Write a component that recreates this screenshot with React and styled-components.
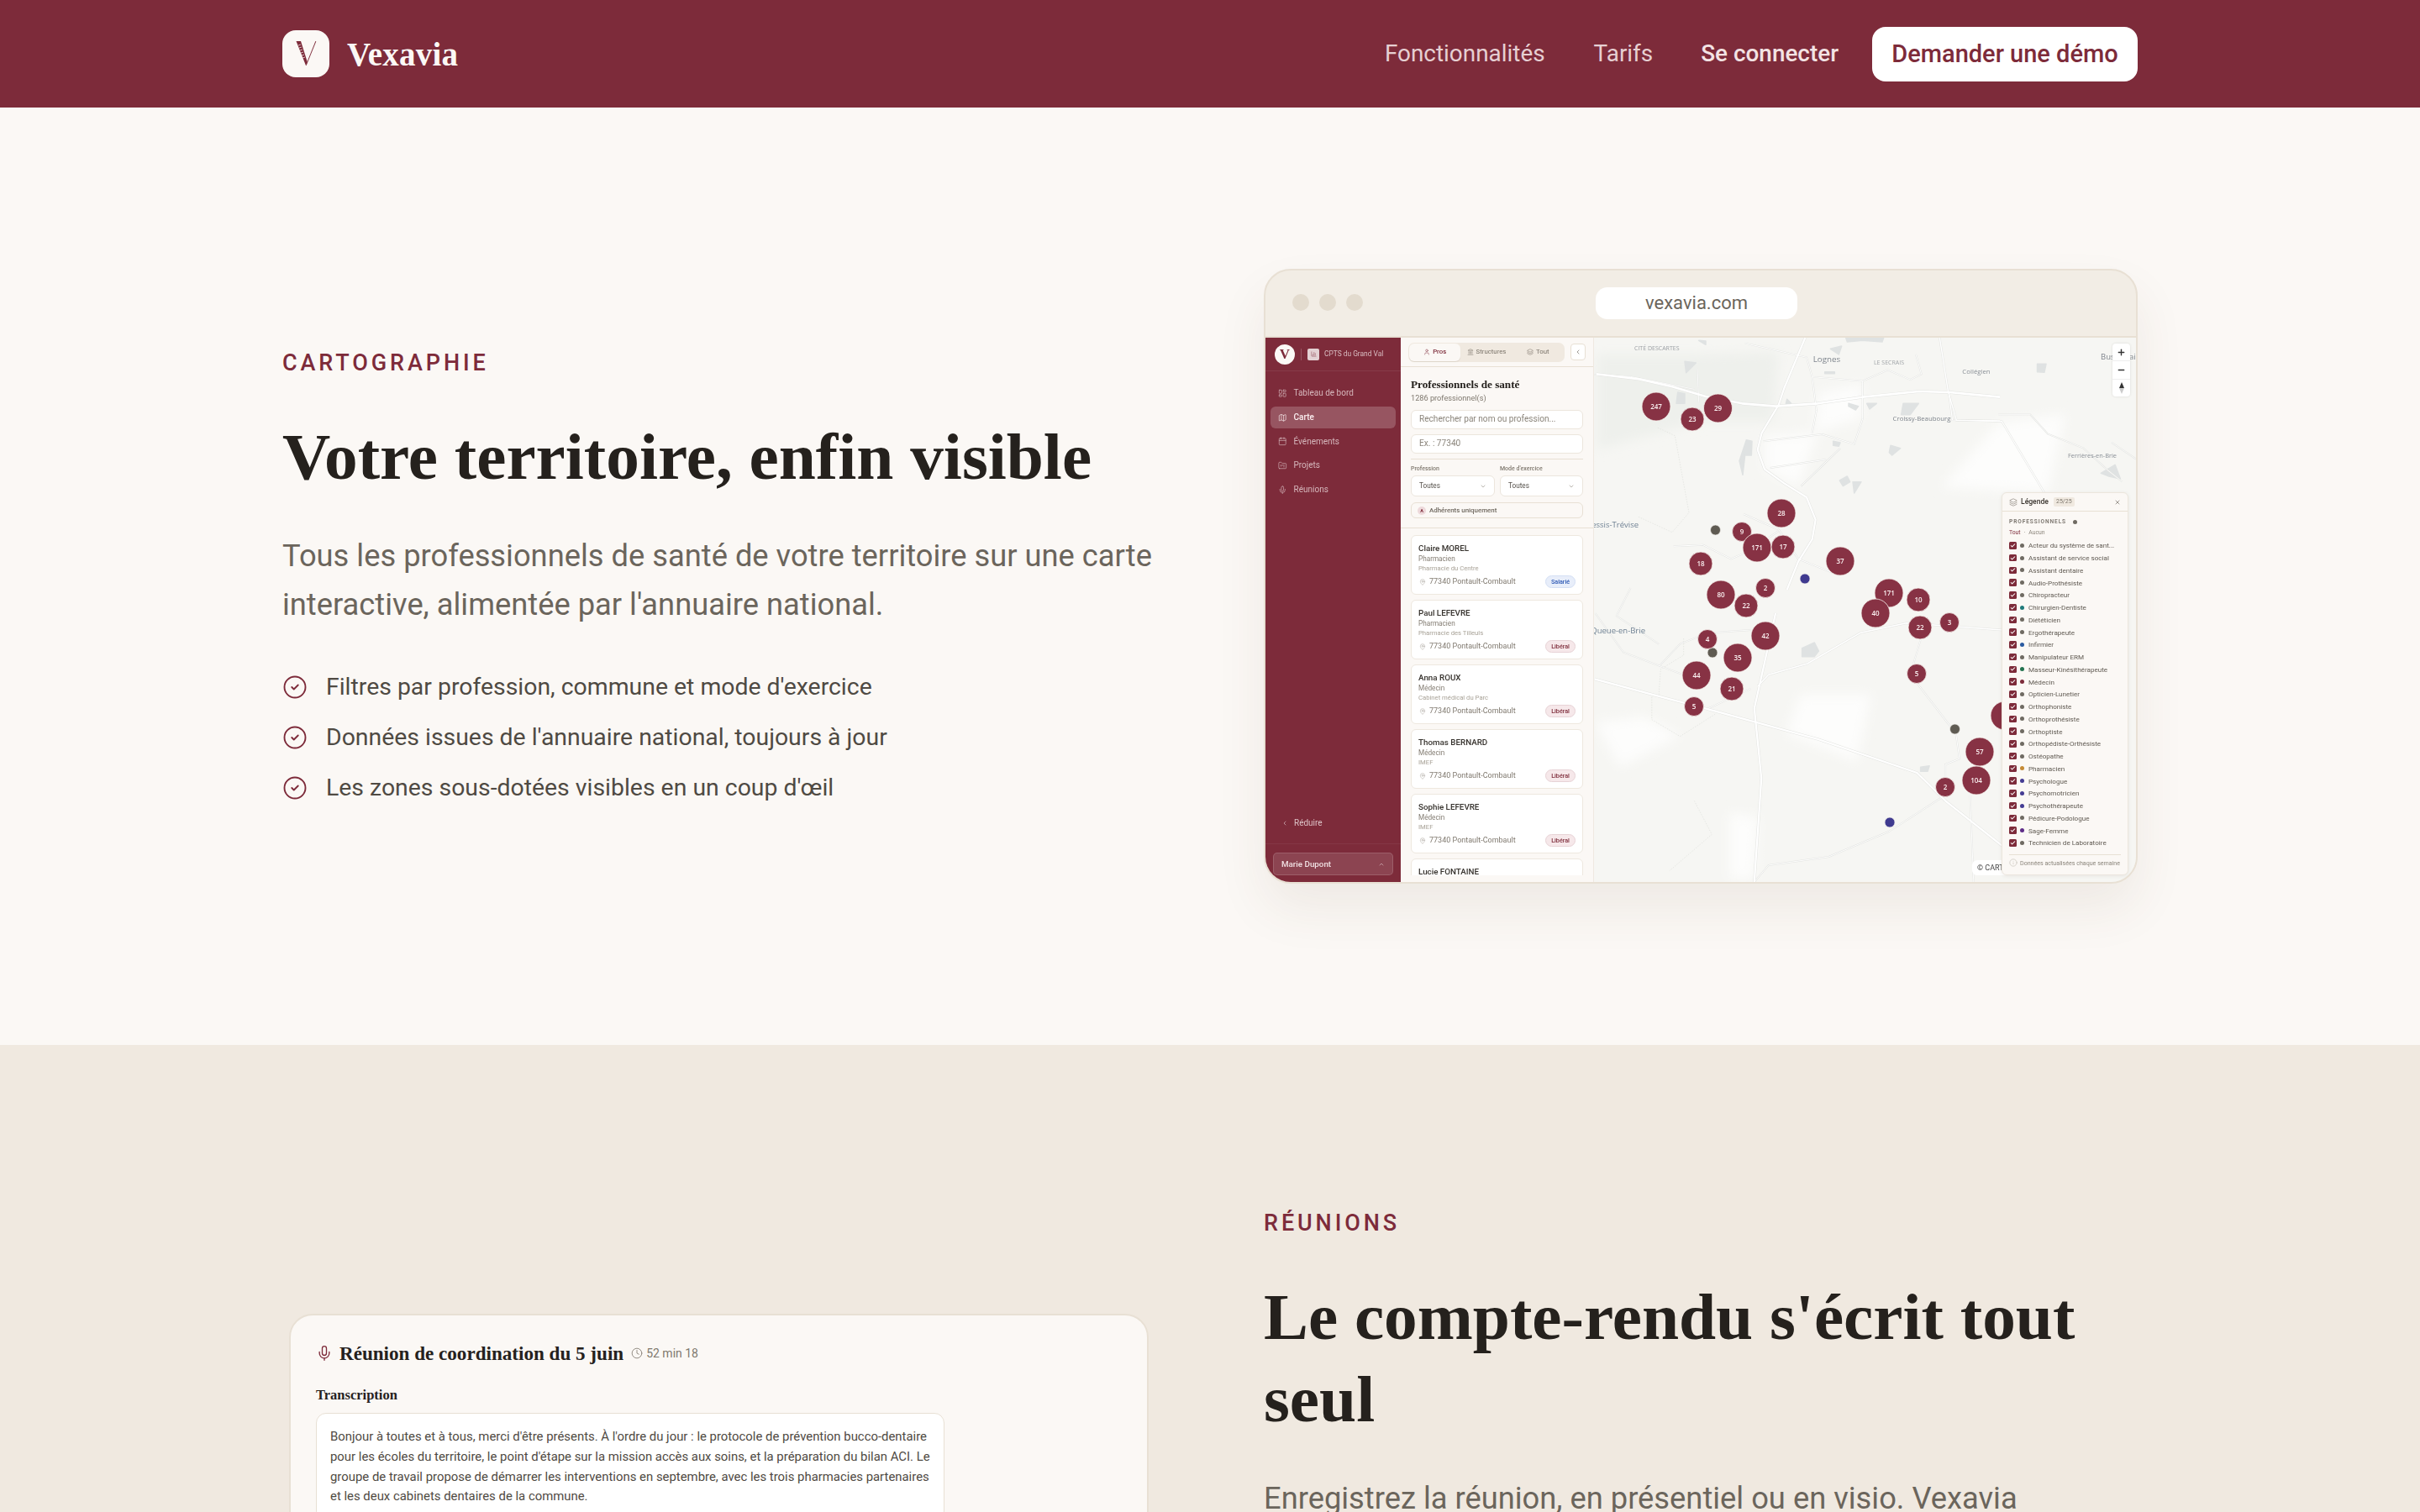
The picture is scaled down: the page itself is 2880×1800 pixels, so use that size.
import React from "react";
import styled, { createGlobalStyle } from "styled-components";
import {
  LayoutDashboard, Map as MapIcon, Calendar, FolderKanban, Mic, ChevronLeft, ChevronDown, ChevronUp,
  User, Landmark, Layers, MapPin, X, Check, Info, CircleCheck, Clock, Plus, Minus, BarChart3,
} from "lucide-react";

const SANS = '"Roboto","Liberation Sans",sans-serif';
const SERIF = '"Liberation Serif","DejaVu Serif",serif';
const WINE = "#7D2B3A";
const CREAM = "#FBF8F5";
const SAND = "#F0E9E0";
const LINE = "#E8E0D4";
const INK = "#25211D";
const MUTED = "#6B655C";

const Global = createGlobalStyle`
  html, body { margin: 0; padding: 0; background: ${CREAM}; overflow: hidden; }
  #root { height: 1800px; overflow: hidden; font-family: ${SANS}; }
  * { box-sizing: border-box; }
`;

/* ---------- top bar ---------- */
const TopBar = styled.header`
  height: 128px; background: ${WINE}; padding: 0 336px;
  display: flex; align-items: center; justify-content: space-between;
`;
const Brand = styled.div`display: flex; align-items: center; gap: 21px;`;
const LogoTile = styled.div`
  width: 56px; height: 56px; border-radius: 16px; background: ${CREAM}; display: flex;
`;
const BrandName = styled.span`
  font: 700 39px/1 ${SERIF}; color: ${CREAM}; letter-spacing: 0.2px;
`;
const TopNav = styled.nav`display: flex; align-items: center;`;
const TopLink = styled.a`
  font: ${p => (p.$strong ? 500 : 400)} 27.9px/1 ${SANS};
  color: ${p => (p.$strong ? "#F3E3E4" : "#E6CFD2")};
  margin-right: ${p => p.$gap}px;
`;
const DemoButton = styled.a`
  height: 65px; width: 316px; border-radius: 16px; background: #fff; color: ${WINE};
  font: 500 29px/65px ${SANS}; text-align: center;
`;

/* ---------- sections ---------- */
const Section = styled.section`
  background: ${p => p.$bg}; padding: 192px 336px;
  display: grid; grid-template-columns: 1040px 1040px; column-gap: 128px;
  align-items: ${p => p.$align};
`;
const Eyebrow = styled.div`
  font: 500 27px/40px ${SANS}; color: ${WINE}; letter-spacing: 3.9px; text-transform: uppercase;
`;
const Heading = styled.h2`
  margin: 42px 0 0; font: 700 79.3px/98px ${SERIF}; color: ${INK}; letter-spacing: 0;
`;
const Lead = styled.p`
  margin: 41px 0 0; font: 400 36.3px/58px ${SANS}; color: ${MUTED};
`;
const Bullets = styled.ul`
  list-style: none; margin: 46px 0 0; padding: 0; display: flex; flex-direction: column; gap: 15px;
`;
const Bullet = styled.li`
  display: flex; align-items: center; gap: 22px; font: 400 28.4px/45px ${SANS}; color: #4F4A43;
  svg { color: ${WINE}; flex: none; }
`;

/* ---------- browser frame ---------- */
const Frame = styled.div`
  height: 732px; border: 2px solid ${LINE}; border-radius: 32px; overflow: hidden; background: #F2EDE5;
  box-shadow: 0 30px 60px rgba(90, 60, 40, 0.08); display: flex; flex-direction: column;
`;
const Chrome = styled.div`
  height: 80px; flex: none; border-bottom: 2px solid ${LINE}; display: flex; align-items: center;
  padding-left: 32px;
`;
const Dots = styled.div`display: flex; gap: 12px; margin-bottom: 2px;`;
const Dot = styled.i`width: 20px; height: 20px; border-radius: 50%; background: #E3DBCE;`;
const UrlPill = styled.div`
  width: 240px; height: 38px; margin-left: 277px; border-radius: 14px; background: #fff;
  font: 400 22px/38px ${SANS}; color: ${MUTED}; text-align: center;
`;
const Screen = styled.div`flex: 1; display: flex; min-height: 0; filter: blur(0.35px);`;

/* ---------- mock sidebar ---------- */
const Side = styled.aside`
  width: 161px; flex: none; background: ${WINE}; display: flex; flex-direction: column; color: #E9D6D9;
`;
const SideBrand = styled.div`
  height: 40px; flex: none; display: flex; align-items: center; padding-left: 11px;
  border-bottom: 1px solid rgba(255,255,255,0.08);
`;
const SideLogo = styled.span`
  width: 24px; height: 24px; border-radius: 50%; background: ${CREAM}; color: ${WINE};
  font: 700 17px/24px ${SERIF}; text-align: center;
`;
const SideDivider = styled.i`width: 1px; height: 14px; background: rgba(255,255,255,.2); margin: 0 7px;`;
const OrgTile = styled.span`
  width: 14px; height: 14px; border-radius: 2px; background: #EFE3E4; color: ${WINE}; opacity: .9;
  display: flex; align-items: center; justify-content: center; margin-right: 6px;
`;
const OrgName = styled.span`font: 400 8.4px/1 ${SANS}; color: #D9BDC2; white-space: nowrap;`;
const SideNav = styled.nav`
  padding: 13px 6px 0; display: flex; flex-direction: column; gap: 2.75px; flex: 1;
`;
const SideItem = styled.a`
  height: 26px; border-radius: 6px; padding-left: 9px; display: flex; align-items: center; gap: 8px;
  font: ${p => (p.$active ? 500 : 400)} 10px/1 ${SANS};
  color: ${p => (p.$active ? "#FBEFF0" : "#D6B8BD")};
  background: ${p => (p.$active ? "rgba(255,255,255,.2)" : "transparent")};
`;
const Collapse = styled.div`
  height: 14px; margin-bottom: 17px; padding-left: 19px; display: flex; align-items: center; gap: 7px;
  font: 400 10px/1 ${SANS}; color: #DDC3C7;
`;
const SideFoot = styled.div`
  height: 46px; flex: none; border-top: 1px solid rgba(255,255,255,.06); padding: 10px 9px 9px;
`;
const UserBox = styled.div`
  height: 27px; border-radius: 5px; background: rgba(255,255,255,.12); border: 1px solid rgba(255,255,255,.14);
  display: flex; align-items: center; justify-content: space-between; padding: 0 9px;
  font: 500 9.8px/1 ${SANS}; color: #F1E1E3;
`;

/* ---------- mock list panel ---------- */
const Panel = styled.div`
  width: 230px; flex: none; background: ${CREAM}; border-right: 1px solid #EFE9E1;
  display: flex; flex-direction: column; overflow: hidden; padding-bottom: 8px;
`;
const PanelTabs = styled.div`
  height: 35px; flex: none; display: flex; align-items: center; gap: 7px; padding: 0 9px;
  border-bottom: 1px solid ${LINE};
`;
const TabGroup = styled.div`
  width: 186px; height: 23px; padding: 1px; border-radius: 7px; background: ${SAND}; display: flex;
`;
const Tab = styled.div`
  flex: 1; border-radius: 6px; display: flex; align-items: center; justify-content: center; gap: 3px;
  font: ${p => (p.$active ? 500 : 400)} 7.8px/1 ${SANS};
  color: ${p => (p.$active ? WINE : "#7A7369")};
  background: ${p => (p.$active ? CREAM : "transparent")};
  box-shadow: ${p => (p.$active ? "0 1px 1px rgba(60,40,20,.1)" : "none")};
`;
const RoundBtn = styled.div`
  width: 18px; height: 20px; border-radius: 4px; background: #fff; border: 1px solid ${LINE};
  display: flex; align-items: center; justify-content: center; color: ${MUTED};
`;
const PanelHead = styled.div`padding: 0 12px;`;
const PanelTitle = styled.h3`
  margin: 14px 0 0; font: 700 13.2px/14px ${SERIF}; color: ${INK};
`;
const PanelSub = styled.div`margin-top: 3px; font: 400 9.2px/12px ${SANS}; color: #7F786E;`;
const Field = styled.div`
  height: 23px; margin-top: ${p => p.$mt}px; border-radius: 6px; background: #fff; border: 1px solid #ECE6DD;
  padding-left: 9px; display: flex; align-items: center; font: 400 10.1px/1 ${SANS}; color: #8B857B;
`;
const Rule = styled.hr`border: 0; border-top: 1px solid ${LINE}; margin: ${p => p.$m};`;
const FilterGrid = styled.div`display: grid; grid-template-columns: 100px 99px; column-gap: 6px; margin-top: 6px;`;
const FilterLabel = styled.div`font: 500 7px/10px ${SANS}; color: #7F786E;`;
const Select = styled.div`
  height: 25px; margin-top: 3px; border-radius: 6px; background: #fff; border: 1px solid #ECE6DD;
  padding: 0 9px; display: flex; align-items: center; justify-content: space-between;
  font: 400 8.2px/1 ${SANS}; color: #55504A; svg { color: #9A948A; }
`;
const Toggle = styled.div`
  height: 19px; margin-top: 7px; border-radius: 6px; border: 1px solid ${LINE};
  padding-left: 7px; display: flex; align-items: center; gap: 4px; font: 500 7.9px/1 ${SANS}; color: #6F685F;
`;
const AdhBadge = styled.span`
  width: 10px; height: 10px; border-radius: 50%; background: #EDD9DB; color: ${WINE};
  font: 700 5.5px/10px ${SANS}; text-align: center;
`;
const CardList = styled.div`
  flex: 1; min-height: 0; overflow: hidden; padding: 0 12px; display: flex; flex-direction: column; gap: 6px;
  border-top: 1px solid ${LINE}; margin-top: 11px; padding-top: 8px;
`;
const ProCard = styled.article`
  flex: none; height: 71px; border-radius: 6px; background: #fff; border: 1px solid #EEE8DF;
  padding: 8px 8px 0;
`;
const ProName = styled.div`font: 500 9.8px/13px ${SANS}; color: #35312C;`;
const ProRole = styled.div`font: 400 8.2px/12px ${SANS}; color: #837C72;`;
const ProOrg = styled.div`font: 400 7.7px/11px ${SANS}; color: #A8A297;`;
const ProAddr = styled.div`
  height: 15px; margin-top: 3px; display: flex; align-items: center; gap: 4px;
  font: 400 9px/1 ${SANS}; color: #7F786E; svg { color: #9A948A; margin-left: 1px; }
`;
const ModeTag = styled.span`
  margin-left: auto; width: 36px; height: 15px; border-radius: 8px; text-align: center;
  font: 500 7.2px/13px ${SANS};
  color: ${p => (p.$blue ? "#2C58B4" : WINE)};
  background: ${p => (p.$blue ? "#E8EEFA" : "#F6E8EA")};
  border: 1px solid ${p => (p.$blue ? "#D4DFF4" : "#E7D3D6")};
`;

/* ---------- mock map ---------- */
const MapArea = styled.div`flex: 1; position: relative; overflow: hidden; background: #F6F6F3;`;
const MapCanvas = styled.svg`display: block; width: 645px; height: 648px;`;
const MapControls = styled.div`
  position: absolute; top: 7px; right: 7px; width: 21px; height: 63px; border-radius: 4px; background: #fff;
  box-shadow: 0 0 3px rgba(0,0,0,.12); display: flex; flex-direction: column; color: #333;
`;
const MapCtrl = styled.div`
  flex: 1; display: flex; align-items: center; justify-content: center;
  & + & { border-top: 1px solid #eee; }
`;
const Attribution = styled.div`
  position: absolute; right: 151px; bottom: 8px; width: 44px; height: 18px; border-radius: 6px 0 0 6px;
  background: #fff; padding-left: 6px; font: 400 9px/18px ${SANS}; color: #444; white-space: nowrap; overflow: hidden;
`;
const Legend = styled.aside`
  position: absolute; top: 184px; right: 9px; width: 151px; height: 456px; border-radius: 6px;
  background: ${CREAM}; border: 1px solid #ECE6DD; box-shadow: 0 1px 4px rgba(60,40,20,.08);
  padding: 0 8px;
`;
const LegendHead = styled.div`
  height: 22px; margin: 0 -8px; padding: 0 8px; border-bottom: 1px solid ${LINE};
  display: flex; align-items: center; gap: 4px; font: 500 8.6px/1 ${SANS}; color: #3A352F;
  svg { color: #6F685F; }
`;
const CountBadge = styled.span`
  margin-left: 2px; padding: 0 3px; border-radius: 2px; background: ${SAND}; font: 400 7px/11px ${SANS}; color: #7F786E;
`;
const LegendClose = styled.span`margin-left: auto; display: flex; color: #6F685F;`;
const GroupTitle = styled.div`
  margin-top: 6px; height: 12px; display: flex; align-items: center; gap: 3px;
  font: 600 6.6px/12px ${SANS}; letter-spacing: .9px; color: #77716A;
`;
const GroupActions = styled.div`margin-top: 2px; font: 400 6.8px/11px ${SANS}; color: #8B857B;`;
const ActAll = styled.span`color: ${WINE}; margin-right: 4px;`;
const ActNone = styled.span`margin-left: 4px;`;
const LegendRows = styled.div`margin-top: 2px; display: flex; flex-direction: column;`;
const LegendRow = styled.div`
  height: 14.75px; display: flex; align-items: center; font: 400 8.1px/1 ${SANS}; color: #5F5951; white-space: nowrap;
`;
const CheckBox = styled.span`
  width: 8.5px; height: 8.5px; border-radius: 1.5px; background: ${WINE}; color: #fff; flex: none;
  display: flex; align-items: center; justify-content: center;
`;
const ColorDot = styled.i`
  width: 5px; height: 5px; border-radius: 50%; background: ${p => p.$c}; margin: 0 5px 0 4.5px; flex: none;
`;
const LegendFoot = styled.div`
  margin-top: 6px; border-top: 1px solid ${LINE}; height: 20px; display: flex; align-items: center; gap: 3px;
  font: 400 7.1px/1 ${SANS}; color: #8B857B; white-space: nowrap; svg { color: #AAA498; flex: none; }
`;

/* ---------- meeting card ---------- */
const MeetCol = styled.div`padding: 128px 0 0 8px;`;
const MeetCard = styled.div`
  width: 1023px; height: 500px; border: 2px solid ${LINE}; border-radius: 28px; background: ${CREAM};
  padding: 30px 30px 0;
`;
const MeetHead = styled.div`
  height: 30px; display: flex; align-items: center; svg { flex: none; }
`;
const MeetTitle = styled.h4`margin: 0 9px 0 8px; font: 700 23.1px/30px ${SERIF}; color: ${INK};`;
const MeetTime = styled.span`
  margin-left: 4px; font: 400 14px/1 ${SANS}; color: #7F786E;
`;
const TransLabel = styled.h5`margin: 25px 0 0; font: 700 16.5px/20px ${SERIF}; color: ${INK};`;
const TransBox = styled.div`
  width: 748px; margin-top: 11px; border: 1px solid ${LINE}; border-radius: 12px; background: #fff;
  padding: 16px 16px; font: 400 14.9px/23.8px ${SANS}; color: #4F4A43; white-space: nowrap;
`;

/* ---------- data ---------- */
const z12 = pts => pts.map(([x, y]) => `${1950 + x / 3},${402 + y / 3}`).join(" ");
const z5 = pts => pts.map(([x, y]) => `${1890 + x / 2.376},${320 + y / 3}`).join(" ");
const z6 = pts => pts.map(([x, y]) => `${1890 + x / 2.376},${700 + y / 3}`).join(" ");

const ROADS = [
  [z12([[-150, 130], [0, 148], [120, 175], [240, 210], [370, 235], [490, 245], [640, 235], [800, 212], [1000, 192], [1110, 195], [1290, 212]]), 2.6],
  [z12([[595, 0], [520, 180], [500, 240], [440, 340], [425, 400], [450, 470], [520, 520], [600, 570], [632, 650], [620, 720], [570, 800], [530, 900]]), 2.2],
  [z12([[1075, 0], [1105, 190], [1135, 295], [1290, 297]]), 1.4],
  [z12([[800, 155], [800, 290], [770, 380], [655, 345], [445, 370]]), 1],
  [z12([[620, 140], [635, 260], [620, 340]]), 1],
  [z12([[470, 465], [670, 435]]), 1],
  [z12([[720, 395], [580, 530]]), 1],
  [z12([[125, 745], [230, 740], [330, 790], [400, 760], [500, 690]]), 1],
  [z12([[210, 110], [215, 230]]), .8],
  [z12([[380, 20], [600, 70], [620, 140], [800, 155], [890, 115], [970, 150], [1010, 130], [990, 60]]), .9],
  [z12([[375, 630], [500, 685], [570, 790], [720, 850]]), 1],
  [z5([[1020, 440], [1030, 540], [1170, 545], [1290, 800]]), 1.2],
  [z5([[1160, 520], [1250, 520], [1300, 590], [1400, 640], [1470, 720], [1510, 760]]), .8],
  [z5([[1480, 620], [1550, 680]]), .8],
  [z5([[18, 378], [120, 385], [300, 430]]), .8],
  [z6([[18, 325], [180, 380], [360, 440], [650, 540], [930, 660], [1010, 760], [1170, 920]]), 2.2],
  [z6([[530, 90], [470, 430], [490, 680], [470, 1050]]), 2.2],
  [z6([[1170, 150], [900, 125], [770, 160], [620, 270], [510, 310], [480, 350]]), 1.5],
  [z6([[930, 340], [1040, 520], [1050, 610], [1010, 630], [1010, 680]]), 1],
  [z6([[1010, 740], [850, 870], [680, 960], [510, 990], [470, 1050]]), .9],
  [z6([[1080, 740], [1090, 1050]]), .9],
  [z6([[940, 185], [920, 270]]), .8],
  [z6([[340, 430], [460, 360]]), .9],
  [z6([[200, 280], [260, 200], [340, 160], [460, 150]]), .8],
  [z6([[20, 90], [100, 230], [270, 310]]), .8],
  [z6([[120, 0], [80, 100], [200, 200]]), .8],
];
const DASHES = [
  z12([[0, 640], [120, 695], [180, 625], [130, 350], [65, 320]]),
  z6([[300, 760], [350, 880], [230, 1010]]),
  z6([[180, 380], [180, 470], [260, 530], [360, 450]]),
  z6([[270, 180], [270, 240], [205, 290], [200, 380]]),
];
const WATER = [
  z12([[165, 85], [205, 90], [170, 125]]),
  z12([[140, 195], [165, 200], [165, 235], [135, 235]]),
  z12([[385, 365], [405, 370], [403, 420], [380, 420], [372, 490], [360, 440]]),
  z12([[945, 235], [1000, 235], [970, 275], [938, 275]]),
  z12([[900, 385], [935, 395], [905, 420], [895, 410]]),
  z12([[815, 235], [850, 235], [825, 255]]),
  z12([[750, 235], [785, 245], [775, 258], [750, 245]]),
  z12([[695, 370], [720, 375], [715, 388], [695, 385]]),
  z12([[718, 510], [745, 495], [755, 515], [730, 530]]),
  z12([[765, 515], [795, 515], [770, 555]]),
  z12([[740, 0], [875, 0], [870, 15], [800, 10], [745, 15]]),
  z12([[685, 40], [725, 30], [715, 60]]),
  z12([[665, 122], [700, 122], [700, 128], [665, 128]]),
  z12([[215, 10], [240, 12], [240, 25]]),
  z12([[530, 220], [545, 235], [525, 240]]),
  z5([[1450, 730], [1490, 700], [1505, 750], [1470, 740]]),
  z5([[1270, 340], [1295, 340], [1290, 370], [1270, 368]]),
  z6([[605, 215], [640, 195], [652, 225], [640, 245], [605, 245]]),
  z6([[940, 640], [965, 635], [960, 655], [940, 655]]),
];
const PATCHES = [
  [z12([[-150, 60], [215, 60], [500, 50], [480, 300], [220, 300], [-150, 400]]), "#EEF0EC"],
  [z12([[640, 200], [800, 165], [790, 290], [630, 340]]), "#FDFDFC"],
  [z12([[450, 350], [640, 340], [570, 530], [450, 470]]), "#FDFDFC"],
  [z5([[1160, 550], [1350, 520], [1300, 800], [1000, 780]]), "#FDFDFC"],
  [z6([[600, 380], [800, 380], [760, 620], [560, 520]]), "#FDFDFC"],
  [z6([[400, 800], [480, 820], [470, 1040], [400, 1040]]), "#FDFDFC"],
  [z6([[20, 480], [160, 460], [260, 530], [90, 640]]), "#FDFDFC"],
];
const MARKERS = [
  [2386, 852, 34, "2"], [1971, 484, 34, "247"], [2014, 499, 28, "23"], [2044.5, 486, 34, "29"], [2120, 611, 34, "28"],
  [2073, 633, 23, "9"], [2091, 652, 34, "171"], [2122, 651, 28, "17"], [2024, 671, 28, "18"], [2190, 668, 34, "37"],
  [2101, 700, 23, "2"], [2048, 708, 34, "80"], [2248, 706, 34, "171"], [2283, 714, 28, "10"], [2078, 721, 28, "22"],
  [2232, 730, 34, "40"], [2285, 747, 28, "22"], [2320, 741, 23, "3"], [2032, 761, 23, "4"], [2101, 757, 34, "42"],
  [2068, 783, 34, "35"], [2281, 802, 23, "5"], [2019, 804, 34, "44"], [2061, 820, 28, "21"], [2016, 841, 23, "5"],
  [2356, 895, 34, "57"], [2352, 929, 34, "104"], [2315, 937, 23, "2"],
];
const PINS = [[2041.5, 631, "#5F5B52"], [2148, 689, "#3F3A8F"], [2038, 777, "#5F5B52"], [2326.5, 868, "#5F5B52"], [2249, 979, "#3F3A8F"]];
const PLACES = [
  ["CITÉ DESCARTES", 1945, 417, 7, "start", "#9A9EA3"], ["Lognes", 2174, 431, 9.8, "middle", "#7F858D"],
  ["LE SECRAIS", 2248, 434, 7, "middle", "#A2A6AA"], ["Collégien", 2352, 445, 7.8, "middle", "#8A9097"],
  ["Croissy-Beaubourg", 2287, 501, 7.8, "middle", "#7F858D"], ["Ferrières-en-Brie", 2490, 545, 7.4, "middle", "#8A9097"],
  ["Bussy-Saint-Georges", 2500, 428, 9.5, "start", "#7F858D"], ["Le Plessis-Trévise", 1950, 628, 9.5, "end", "#6F8193"],
  ["La Queue-en-Brie", 1958, 754, 9.5, "end", "#6F8193"],
];
const PEOPLE = [
  ["Claire MOREL", "Pharmacien", "Pharmacie du Centre", true],
  ["Paul LEFEVRE", "Pharmacien", "Pharmacie des Tilleuls"],
  ["Anna ROUX", "Médecin", "Cabinet médical du Parc"],
  ["Thomas BERNARD", "Médecin", "IMEF"],
  ["Sophie LEFEVRE", "Médecin", "IMEF"],
];
const G = "#6F6A62";
const TRADES = [
  ["Acteur du système de sant...", G], ["Assistant de service social", G], ["Assistant dentaire", G], ["Audio-Prothésiste", G],
  ["Chiropracteur", G], ["Chirurgien-Dentiste", "#1F7A7A"], ["Diététicien", G], ["Ergothérapeute", G], ["Infirmier", "#2A5AA0"],
  ["Manipulateur ERM", G], ["Masseur-Kinésithérapeute", "#23724F"], ["Médecin", WINE], ["Opticien-Lunetier", G], ["Orthophoniste", G],
  ["Orthoprothésiste", G], ["Orthoptiste", G], ["Orthopédiste-Orthésiste", G], ["Ostéopathe", G], ["Pharmacien", "#C58A35"],
  ["Psychologue", "#443C93"], ["Psychomotricien", "#443C93"], ["Psychothérapeute", "#443C93"], ["Pédicure-Podologue", G],
  ["Sage-Femme", "#5E2C87"], ["Technicien de Laboratoire", G],
];
const NAV = [
  [LayoutDashboard, "Tableau de bord"], [MapIcon, "Carte", true], [Calendar, "Événements"], [FolderKanban, "Projets"], [Mic, "Réunions"],
];
const TRANSCRIPT = [
  "Bonjour à toutes et à tous, merci d'être présents. À l'ordre du jour : le protocole de prévention bucco-dentaire",
  "pour les écoles du territoire, le point d'étape sur la mission accès aux soins, et la préparation du bilan ACI. Le",
  "groupe de travail propose de démarrer les interventions en septembre, avec les trois pharmacies partenaires",
  "et les deux cabinets dentaires de la commune.",
];

/* ---------- pieces ---------- */
const LogoMark = () => (
  <svg width="56" height="56" viewBox="0 0 56 56">
    <polygon points="16.5,13 22,13 29.8,38 28,42" fill={WINE} />
    <polygon points="39.4,13 40.3,13.3 28.6,42 27.9,41.4" fill={WINE} />
    <path d="M19 18l3-1M20 21l3-1M21 24l3-1M22 27l3-1M23 30l3-1M24 33l3-1" stroke={CREAM} strokeWidth=".7" />
  </svg>
);

const MapDrawing = () => (
  <MapCanvas viewBox="1897 402 645 648">
    <defs>
      <filter id="soft" x="-30%" y="-30%" width="160%" height="160%"><feGaussianBlur stdDeviation="7" /></filter>
    </defs>
    <g filter="url(#soft)">
      {PATCHES.map(([p, c], i) => <polygon key={i} points={p} fill={c} />)}
    </g>
    {WATER.map((p, i) => <polygon key={i} points={p} fill="#DFE2E2" strokeLinejoin="round" stroke="#DFE2E2" strokeWidth="1.5" />)}
    {DASHES.map((p, i) => <polyline key={i} points={p} fill="none" stroke="#DEDFDB" strokeWidth=".7" strokeDasharray="1.5 1.5" />)}
    {ROADS.map(([p, w], i) => <polyline key={`c${i}`} points={p} fill="none" stroke="#E3E4E1" strokeWidth={w + 1} strokeLinejoin="round" />)}
    {ROADS.map(([p, w], i) => <polyline key={`r${i}`} points={p} fill="none" stroke="#FFFFFF" strokeWidth={w} strokeLinejoin="round" />)}
    {PLACES.map(([t, x, y, s, a, c]) => (
      <text key={t} x={x} y={y} fontSize={s} textAnchor={a} fill={c} fontFamily='"Open Sans",sans-serif' fontWeight="500">{t}</text>
    ))}
    {PINS.map(([x, y, c], i) => <circle key={i} cx={x} cy={y} r="6" fill={c} stroke="#F3F1EC" strokeWidth=".7" />)}
    {MARKERS.map(([x, y, d, t], i) => (
      <g key={i}>
        <circle cx={x} cy={y} r={d / 2} fill="#873244" stroke="#F7F3EE" strokeWidth=".8" />
        <text x={x} y={y + 3} fontSize="8" textAnchor="middle" fill="#FBF1F1" fontFamily='"Open Sans",sans-serif' fontWeight="600">{t}</text>
      </g>
    ))}
  </MapCanvas>
);

const ProductShot = () => (
  <Frame>
    <Chrome>
      <Dots><Dot /><Dot /><Dot /></Dots>
      <UrlPill>vexavia.com</UrlPill>
    </Chrome>
    <Screen>
      <Side>
        <SideBrand>
          <SideLogo>V</SideLogo>
          <SideDivider />
          <OrgTile><BarChart3 size={7} strokeWidth={1.5} /></OrgTile>
          <OrgName>CPTS du Grand Val</OrgName>
        </SideBrand>
        <SideNav>
          {NAV.map(([Icon, label, active]) => (
            <SideItem key={label} $active={active}><Icon size={10.5} strokeWidth={1.5} />{label}</SideItem>
          ))}
        </SideNav>
        <Collapse><ChevronLeft size={8} strokeWidth={2} />Réduire</Collapse>
        <SideFoot>
          <UserBox>Marie Dupont<ChevronUp size={8} strokeWidth={1.5} /></UserBox>
        </SideFoot>
      </Side>
      <Panel>
        <PanelTabs>
          <TabGroup>
            <Tab $active><User size={8} strokeWidth={1.5} />Pros</Tab>
            <Tab><Landmark size={8} strokeWidth={1.5} />Structures</Tab>
            <Tab><Layers size={8} strokeWidth={1.5} />Tout</Tab>
          </TabGroup>
          <RoundBtn><ChevronLeft size={8} strokeWidth={2} /></RoundBtn>
        </PanelTabs>
        <PanelHead>
          <PanelTitle>Professionnels de santé</PanelTitle>
          <PanelSub>1286 professionnel(s)</PanelSub>
          <Field $mt={8}>Rechercher par nom ou profession...</Field>
          <Field $mt={6}>Ex. : 77340</Field>
          <Rule $m="6px 0 0" />
          <FilterGrid>
            <div><FilterLabel>Profession</FilterLabel><Select>Toutes<ChevronDown size={8} /></Select></div>
            <div><FilterLabel>Mode d'exercice</FilterLabel><Select>Toutes<ChevronDown size={8} /></Select></div>
          </FilterGrid>
          <Toggle><AdhBadge>A</AdhBadge>Adhérents uniquement</Toggle>
        </PanelHead>
        <CardList>
          {PEOPLE.map(([name, role, org, blue]) => (
            <ProCard key={name}>
              <ProName>{name}</ProName>
              <ProRole>{role}</ProRole>
              <ProOrg>{org}</ProOrg>
              <ProAddr>
                <MapPin size={8} strokeWidth={1.3} />77340 Pontault-Combault
                <ModeTag $blue={blue}>{blue ? "Salarié" : "Libéral"}</ModeTag>
              </ProAddr>
            </ProCard>
          ))}
          <ProCard><ProName>Lucie FONTAINE</ProName></ProCard>
        </CardList>
      </Panel>
      <MapArea>
        <MapDrawing />
        <MapControls>
          <MapCtrl><Plus size={11} strokeWidth={3} /></MapCtrl>
          <MapCtrl><Minus size={11} strokeWidth={3} /></MapCtrl>
          <MapCtrl>
            <svg width="8" height="14" viewBox="0 0 8 14"><path d="M4 0l3 7H1z" fill="#333" /><path d="M4 14l3-7H1z" fill="#ccc" /></svg>
          </MapCtrl>
        </MapControls>
        <Attribution>© CARTO</Attribution>
        <Legend>
          <LegendHead>
            <Layers size={10} strokeWidth={1.3} />Légende<CountBadge>25/25</CountBadge>
            <LegendClose><X size={8} /></LegendClose>
          </LegendHead>
          <GroupTitle>PROFESSIONNELS<ColorDot $c={G} /></GroupTitle>
          <GroupActions><ActAll>Tout</ActAll>·<ActNone>Aucun</ActNone></GroupActions>
          <LegendRows>
            {TRADES.map(([t, c]) => (
              <LegendRow key={t}><CheckBox><Check size={7} strokeWidth={3.5} /></CheckBox><ColorDot $c={c} />{t}</LegendRow>
            ))}
          </LegendRows>
          <LegendFoot><Info size={10} strokeWidth={1} />Données actualisées chaque semaine</LegendFoot>
        </Legend>
      </MapArea>
    </Screen>
  </Frame>
);

export default function App() {
  return (
    <>
      <Global />
      <TopBar>
        <Brand>
          <LogoTile><LogoMark /></LogoTile>
          <BrandName>Vexavia</BrandName>
        </Brand>
        <TopNav>
          <TopLink $gap={58}>Fonctionnalités</TopLink>
          <TopLink $gap={57}>Tarifs</TopLink>
          <TopLink $gap={40} $strong>Se connecter</TopLink>
          <DemoButton>Demander une démo</DemoButton>
        </TopNav>
      </TopBar>
      <Section $bg={CREAM} $align="center">
        <div>
          <Eyebrow>Cartographie</Eyebrow>
          <Heading>Votre territoire, enfin visible</Heading>
          <Lead>Tous les professionnels de santé de votre territoire sur une carte interactive, alimentée par l'annuaire national.</Lead>
          <Bullets>
            <Bullet><CircleCheck size={30} strokeWidth={1.5} />Filtres par profession, commune et mode d'exercice</Bullet>
            <Bullet><CircleCheck size={30} strokeWidth={1.5} />Données issues de l'annuaire national, toujours à jour</Bullet>
            <Bullet><CircleCheck size={30} strokeWidth={1.5} />Les zones sous-dotées visibles en un coup d'œil</Bullet>
          </Bullets>
        </div>
        <ProductShot />
      </Section>
      <Section $bg={SAND} $align="start">
        <MeetCol>
          <MeetCard>
            <MeetHead>
              <Mic size={20} strokeWidth={1.6} color={WINE} />
              <MeetTitle>Réunion de coordination du 5 juin</MeetTitle>
              <Clock size={14} strokeWidth={1.4} color="#7F786E" />
              <MeetTime>52 min 18</MeetTime>
            </MeetHead>
            <TransLabel>Transcription</TransLabel>
            <TransBox>{TRANSCRIPT.map(l => <div key={l}>{l}</div>)}</TransBox>
          </MeetCard>
        </MeetCol>
        <div>
          <Eyebrow>Réunions</Eyebrow>
          <Heading>Le compte-rendu s'écrit tout seul</Heading>
          <Lead>Enregistrez la réunion, en présentiel ou en visio. Vexavia</Lead>
        </div>
      </Section>
    </>
  );
}
